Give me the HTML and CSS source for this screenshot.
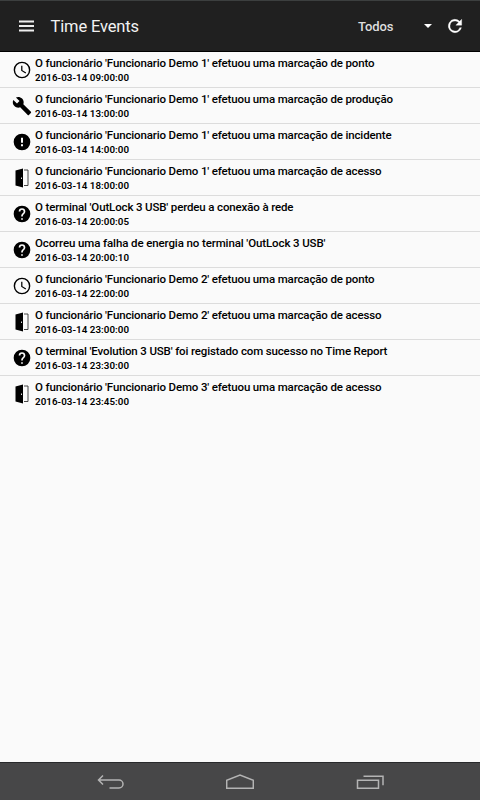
FILE: index.html
```html
<!DOCTYPE html>
<html lang="pt">
<head>
<meta charset="utf-8">
<title>Time Events</title>
<link rel="stylesheet" href="styles.css">
</head>
<body>
<svg class="defs" aria-hidden="true">
  <symbol id="clock" viewBox="0 0 24 24"><path d="M12 2a10 10 0 1 0 0 20 10 10 0 0 0 0-20zm0 18.300a8.300 8.300 0 1 1 0-16.600 8.300 8.300 0 0 1 0 16.600zm.5-13.300H11v6l5.200 3.200.8-1.300-4.500-2.700z"/></symbol>
  <symbol id="wrench" viewBox="0 0 24 24"><path d="M22.700 19l-9.100-9.100c.9-2.300.4-5-1.500-6.900-2-2-5-2.400-7.400-1.300L9 6 6 9 1.600 4.700C.4 7.100.9 10.100 2.900 12.100c1.900 1.900 4.600 2.400 6.900 1.500l9.100 9.100c.4.400 1 .4 1.400 0l2.300-2.300c.5-.4.5-1.100.1-1.400z"/></symbol>
  <symbol id="alert" viewBox="0 0 24 24"><path d="M12 2a10 10 0 1 0 0 20 10 10 0 0 0 0-20zm1.200 15h-2.400v-2.200h2.400zm0-4h-2.400V7h2.400z"/></symbol>
  <symbol id="help" viewBox="0 0 24 24"><path d="M12 2a10 10 0 1 0 0 20 10 10 0 0 0 0-20zm1 17h-2v-2h2zm2.070-7.750l-.9.920C13.450 12.900 13 13.500 13 15h-2v-.5c0-1.100.450-2.100 1.170-2.830l1.240-1.260c.370-.360.590-.860.590-1.410a2 2 0 0 0-4 0H8a4 4 0 0 1 8 0c0 .880-.360 1.680-.930 2.250z"/></symbol>
  <symbol id="door" viewBox="0 0 20 20"><path d="M3.500 2.500 11 .5v19L3.500 17.500z"/><path d="M12 2h4v15.500h-4" fill="none" stroke="#333" stroke-width=".9"/><path d="M9 9.500h1v1.500H9z" fill="#ddd"/></symbol>
</svg>
<header class="bar">
  <svg class="menu" viewBox="0 0 15 12"><path d="M0 1.500h15M0 6h15M0 10.500h15"/></svg>
  <h1 class="title">Time Events</h1>
  <span class="filter">Todos</span>
  <svg class="caret" viewBox="0 0 8 4"><path d="M0 0h8L4 4z"/></svg>
  <svg class="refresh" viewBox="0 0 24 24"><path d="M17.650 6.350A8 8 0 1 0 19.730 14h-2.080A6 6 0 1 1 12 6c1.660 0 3.140.690 4.220 1.780L13 11h7V4z"/></svg>
</header>
<main class="list">
  <div class="row"><svg class="icon"><use href="#clock"/></svg><div class="text"><p class="msg">O funcionário 'Funcionario Demo 1' efetuou uma marcação de ponto</p><p class="date">2016-03-14 09:00:00</p></div></div>
  <div class="row"><svg class="icon"><use href="#wrench"/></svg><div class="text"><p class="msg">O funcionário 'Funcionario Demo 1' efetuou uma marcação de produção</p><p class="date">2016-03-14 13:00:00</p></div></div>
  <div class="row"><svg class="icon"><use href="#alert"/></svg><div class="text"><p class="msg">O funcionário 'Funcionario Demo 1' efetuou uma marcação de incidente</p><p class="date">2016-03-14 14:00:00</p></div></div>
  <div class="row"><svg class="icon"><use href="#door"/></svg><div class="text"><p class="msg">O funcionário 'Funcionario Demo 1' efetuou uma marcação de acesso</p><p class="date">2016-03-14 18:00:00</p></div></div>
  <div class="row"><svg class="icon"><use href="#help"/></svg><div class="text"><p class="msg">O terminal 'OutLock 3 USB' perdeu a conexão à rede</p><p class="date">2016-03-14 20:00:05</p></div></div>
  <div class="row"><svg class="icon"><use href="#help"/></svg><div class="text"><p class="msg outage">Ocorreu uma falha de energia no terminal 'OutLock 3 USB'</p><p class="date">2016-03-14 20:00:10</p></div></div>
  <div class="row"><svg class="icon"><use href="#clock"/></svg><div class="text"><p class="msg">O funcionário 'Funcionario Demo 2' efetuou uma marcação de ponto</p><p class="date">2016-03-14 22:00:00</p></div></div>
  <div class="row"><svg class="icon"><use href="#door"/></svg><div class="text"><p class="msg">O funcionário 'Funcionario Demo 2' efetuou uma marcação de acesso</p><p class="date">2016-03-14 23:00:00</p></div></div>
  <div class="row"><svg class="icon"><use href="#help"/></svg><div class="text"><p class="msg">O terminal 'Evolution 3 USB' foi registado com sucesso no Time Report</p><p class="date">2016-03-14 23:30:00</p></div></div>
  <div class="row"><svg class="icon"><use href="#door"/></svg><div class="text"><p class="msg">O funcionário 'Funcionario Demo 3' efetuou uma marcação de acesso</p><p class="date">2016-03-14 23:45:00</p></div></div>
</main>
<nav class="nav">
  <svg class="key" viewBox="0 0 28 16"><path d="M7 1.500 2.500 6 7 10.500M3 6h20a4 4 0 0 1 0 8H13.500"/></svg>
  <svg class="key" viewBox="0 0 28 16"><path d="M.7 14.300V6.200L14 1l13.300 5.200v8.100z"/></svg>
  <svg class="key" viewBox="0 0 28 16"><path d="M1.500 6.200h21v8.100h-21zM7.500 2.200h19.500v9"/></svg>
</nav>
</body>
</html>
```

FILE: styles.css
```css
* { box-sizing: border-box; }
body {
  margin: 0;
  height: 800px;
  display: flex;
  flex-direction: column;
  background: #fafafa;
  font-family: Roboto, sans-serif;
  overflow: hidden;
}
p, h1 { margin: 0; }
.defs { display: none; }
.bar {
  height: 52px;
  flex: none;
  display: flex;
  align-items: center;
  padding: 0 15.5px 0 19px;
  background: #202020;
  border-top: 1px solid #3c3f3f;
  border-bottom: 1px solid #000;
  color: #f2f2f2;
}
.menu { width: 15px; height: 12px; stroke: #eee; stroke-width: 2; }
.title { margin-left: 16.5px; font-size: 16.5px; font-weight: 400; letter-spacing: -0.15px; }
.filter { margin-left: auto; width: 65.5px; font-size: 13px; font-weight: 500; letter-spacing: -0.1px; color: #ddd; }
.caret { width: 8px; height: 4px; fill: #fff; }
.refresh { width: 20px; height: 20px; margin-left: 13px; fill: #fff; stroke: #fff; stroke-width: 0.4; }
.list { flex: 1; }
.row {
  height: 36px;
  display: flex;
  padding-left: 12px;
  border-bottom: 1px solid #dcdcdc;
}
.row:last-child { border-bottom: 0; }
.icon { width: 20px; height: 20px; margin: 7.5px 3px 0 0; }
.text { padding-top: 4px; color: #000; white-space: nowrap; }
.msg { font-size: 11.5px; line-height: 15px; font-weight: 500; letter-spacing: -0.145px; }
.outage { letter-spacing: -0.11px; }
.date { font-size: 9.8px; line-height: 13px; font-weight: 600; letter-spacing: 0.04px; }
.nav {
  height: 38px;
  flex: none;
  display: flex;
  justify-content: center;
  align-items: center;
  gap: 102px;
  padding-top: 1px;
  background: #474748;
  border-top: 1px solid #28292b;
}
.key { width: 28px; height: 16px; fill: none; stroke: #b4b4b4; stroke-width: 1.5; }
```
